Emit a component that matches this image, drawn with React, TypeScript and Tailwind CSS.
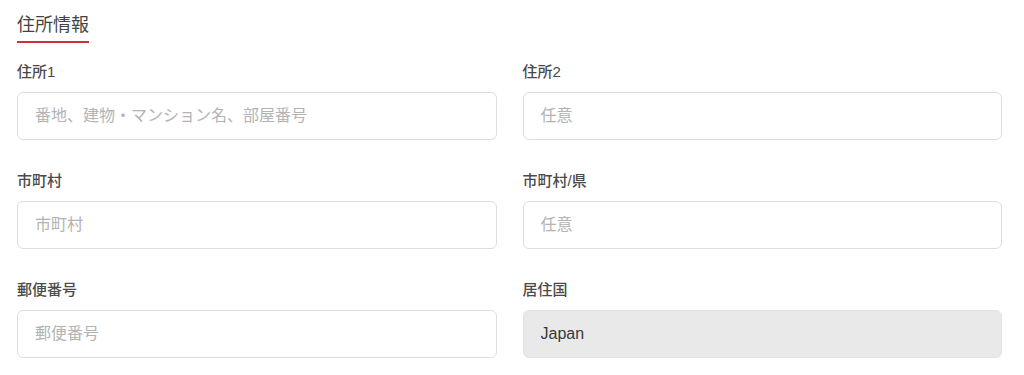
type Field = {
  label: string
  placeholder?: string
  value?: string
  disabled?: boolean
}

const fields: Field[] = [
  { label: '住所1', placeholder: '番地、建物・マンション名、部屋番号' },
  { label: '住所2', placeholder: '任意' },
  { label: '市町村', placeholder: '市町村' },
  { label: '市町村/県', placeholder: '任意' },
  { label: '郵便番号', placeholder: '郵便番号' },
  { label: '居住国', value: 'Japan', disabled: true },
]

function FormField({ label, placeholder, value, disabled }: Field) {
  return (
    <label className="flex flex-col">
      <span className="text-[15px] leading-5 font-medium text-[#4a4a4a] mb-[10px]">{label}</span>
      {disabled ? (
        <input
          readOnly
          value={value}
          className="h-[48px] w-full rounded-[6px] border border-[#e2e2e2] bg-[#e9e9e9] px-[17px] text-[16px] text-[#383838] outline-none"
        />
      ) : (
        <input
          placeholder={placeholder}
          className="h-[48px] w-full rounded-[6px] border border-[#dedede] bg-white px-[17px] text-[16px] text-[#333] outline-none placeholder:text-[#b3b3b3]"
        />
      )}
    </label>
  )
}

export default function App() {
  return (
    <div
      className="min-h-[375px] bg-white pl-[17px] pr-[22px] pt-[13px]"
      style={{ fontFamily: '"Liberation Sans", "Noto Sans CJK JP", sans-serif' }}
    >
      <h2 className="inline-block border-b-2 border-[#c9333b] pb-[4px] text-[18px] leading-6 font-normal text-[#444]">
        住所情報
      </h2>
      <div className="mt-[19px] grid grid-cols-2 gap-x-[26px] gap-y-[31px]">
        {fields.map((f) => (
          <FormField key={f.label} {...f} />
        ))}
      </div>
    </div>
  )
}
